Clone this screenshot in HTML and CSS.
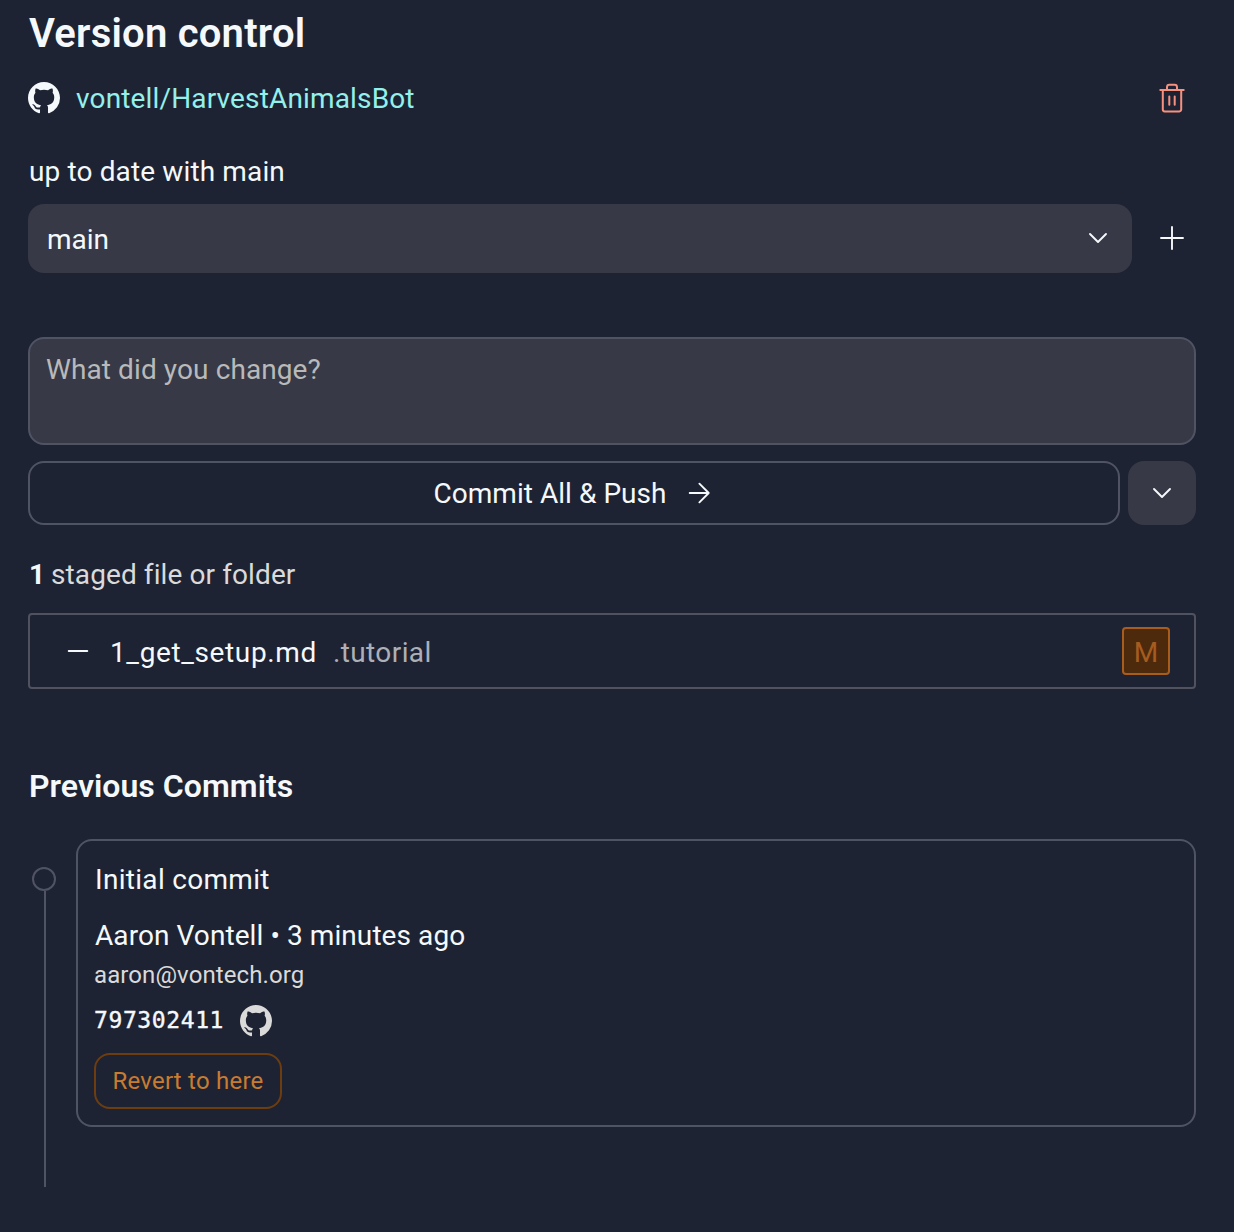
FILE: index.html
```html
<!DOCTYPE html>
<html lang="en">
<head>
<meta charset="utf-8">
<title>Version control</title>
<link rel="stylesheet" href="styles.css">
</head>
<body>
<svg class="sprite" width="0" height="0" aria-hidden="true">
  <symbol id="github" viewBox="0 0 16 16"><path fill="currentColor" d="M8 0C3.58 0 0 3.58 0 8c0 3.54 2.29 6.53 5.47 7.59.4.07.55-.17.55-.38 0-.19-.01-.82-.01-1.49-2.01.37-2.53-.49-2.69-.94-.09-.23-.48-.94-.82-1.13-.28-.15-.68-.52-.01-.53.63-.01 1.08.58 1.23.82.72 1.21 1.87.87 2.33.66.07-.52.28-.87.51-1.07-1.78-.2-3.64-.89-3.64-3.95 0-.87.31-1.59.82-2.15-.08-.2-.36-1.02.08-2.12 0 0 .67-.21 2.2.82.64-.18 1.32-.27 2-.27s1.36.09 2 .27c1.53-1.04 2.2-.82 2.2-.82.44 1.1.16 1.92.08 2.12.51.56.82 1.27.82 2.15 0 3.07-1.87 3.75-3.65 3.95.29.25.54.73.54 1.48 0 1.07-.01 1.93-.01 2.2 0 .21.15.46.55.38A8.01 8.01 0 0 0 16 8c0-4.42-3.58-8-8-8z"/></symbol>
  <symbol id="chevron" viewBox="0 0 32 32"><path d="M8 12l8 8 8-8"/></symbol>
</svg>
<main class="panel">
  <h1 class="title">Version control</h1>
  <div class="repo">
    <svg class="github"><use href="#github"/></svg>
    <a class="repo-link">vontell/HarvestAnimalsBot</a>
    <svg class="icon trash" viewBox="0 0 32 32"><path d="M4.3 8h23.4M6.8 8v19.6a1.8 1.8 0 0 0 1.8 1.8h14.8a1.8 1.8 0 0 0 1.8-1.8V8M11 8V5.2a2.4 2.4 0 0 1 2.4-2.4h5.2a2.4 2.4 0 0 1 2.4 2.4V8M13.3 14.5v8.2M18.7 14.5v8.2"/></svg>
  </div>
  <p class="status">up to date with main</p>
  <div class="branch-row">
    <div class="select"><span>main</span><svg class="icon"><use href="#chevron"/></svg></div>
    <svg class="icon plus" viewBox="0 0 32 32"><path d="M16 5v22M5 16h22"/></svg>
  </div>
  <div class="message">What did you change?</div>
  <div class="commit-row">
    <div class="commit"><span>Commit All &amp; Push</span><svg class="icon" viewBox="0 0 32 32"><path d="M6.7 16h19M16.4 6.7l9.3 9.3-9.3 9.3"/></svg></div>
    <div class="more"><svg class="icon"><use href="#chevron"/></svg></div>
  </div>
  <p class="staged"><b>1</b><span>staged file or folder</span></p>
  <div class="file">
    <svg class="icon" viewBox="0 0 32 32"><path d="M6.7 16h18.6"/></svg>
    <span class="name">1_get_setup.md</span><span class="dir">.tutorial</span>
    <div class="badge"><span>M</span></div>
  </div>
  <h2 class="subtitle">Previous Commits</h2>
  <div class="history">
    <div class="rail"><i class="dot"></i><i class="line"></i></div>
    <article class="card">
      <p class="subject">Initial commit</p>
      <p class="author">Aaron Vontell • 3 minutes ago</p>
      <p class="email">aaron@vontech.org</p>
      <div class="hash"><span>797302411</span><svg class="github"><use href="#github"/></svg></div>
      <div class="revert"><span>Revert to here</span></div>
    </article>
  </div>
</main>
</body>
</html>
```
FILE: styles.css
```css
* { box-sizing: border-box; margin: 0; }
body {
  background: #1e2333;
  color: #f5f9fc;
  font: 28px/36px Roboto, "Noto Sans", sans-serif;
}
.sprite { position: absolute; }
.panel { padding: 9px 38px 0 28px; }
.icon { width: 32px; height: 32px; flex: none; fill: none; stroke: currentColor; stroke-width: 1.9; stroke-linecap: round; stroke-linejoin: round; }
.github { width: 32px; height: 32px; flex: none; }
.title { padding-left: 1px; font-size: 40px; line-height: 50px; font-weight: 600; letter-spacing: 0.22px; }
.repo { display: flex; align-items: center; height: 48px; margin-top: 15px; padding-right: 8px; }
.repo-link { margin-left: 16px; padding-top: 2px; color: #93f0ea; letter-spacing: 0.15px; }
.trash { margin-left: auto; color: #f7917f; stroke-width: 2; }
.status { margin-top: 32px; padding-left: 1px; letter-spacing: 0.13px; }
.branch-row { display: flex; align-items: center; margin-top: 14px; padding-right: 8px; }
.select { display: flex; align-items: center; justify-content: space-between; flex: 1; height: 69px; padding: 0 18px 1px 19px; border-radius: 16px; background: #373947; }
.select span { padding-top: 3px; }
.plus { margin: 0 0 1px 24px; }
.message { height: 108px; margin-top: 64px; padding: 13px 16px; border: 2px solid #4f5364; border-radius: 16px; background: #373947; color: #b9b9b9; letter-spacing: 0.1px; }
.commit-row { display: flex; gap: 8px; height: 64px; margin-top: 16px; }
.commit { display: flex; align-items: center; justify-content: center; gap: 16px; flex: 1; border: 2px solid #4f5364; border-radius: 16px; }
.commit span { padding-top: 2px; letter-spacing: 0.04px; }
.more { display: flex; align-items: center; justify-content: center; width: 68px; border-radius: 16px; background: #373947; }
.staged { display: flex; margin-top: 32px; padding-left: 1px; color: #dadada; letter-spacing: 0.1px; }
.staged b { width: 22px; color: #f5f9fc; }
.file { display: flex; align-items: center; height: 76px; margin-top: 20px; padding: 0 24px 0 32px; border: 2px solid #50525f; border-radius: 4px; }
.name { margin-left: 16px; padding-top: 3px; letter-spacing: 0.63px; }
.dir { margin-left: 16px; padding-top: 3px; color: #adb0b6; letter-spacing: 0.4px; }
.badge { display: flex; align-items: center; justify-content: center; width: 48px; height: 48px; margin-left: auto; border: 2px solid #a95d1d; border-radius: 4px; background: #4d2a0c; color: #a65b1f; }
.badge span { padding-top: 3px; }
.subtitle { margin-top: 77px; padding-left: 1px; font-size: 32px; line-height: 40px; font-weight: 600; letter-spacing: 0.04px; }
.history { display: flex; margin-top: 33px; }
.rail { display: flex; flex-direction: column; width: 48px; height: 348px; padding: 28px 0 0 4px; }
.dot { width: 24px; height: 24px; border: 2px solid #4f5364; border-radius: 50%; }
.line { flex: 1; width: 2px; margin-left: 12px; background: #4f5364; }
.card { flex: 1; height: 288px; padding: 21px 16px 16px; border: 2px solid #4f5364; border-radius: 16px; }
.subject { padding-left: 1px; letter-spacing: 0.3px; }
.author { margin-top: 20px; padding-left: 1px; letter-spacing: 0.08px; }
.email { margin-top: 5px; font-size: 24px; line-height: 32px; color: #dadada; letter-spacing: 0.1px; }
.hash { display: flex; align-items: center; gap: 16px; height: 32px; margin-top: 14px; font: 23px/32px "DejaVu Sans Mono", monospace; letter-spacing: 0.6px; }
.hash span { padding-bottom: 2px; -webkit-text-stroke: 0.4px currentColor; }
.hash .github { color: #dadada; }
.revert { display: flex; align-items: center; justify-content: center; width: 188px; height: 56px; margin-top: 16px; border: 2px solid #6d3d10; border-radius: 16px; color: #c97b30; font-size: 24px; letter-spacing: 0.22px; }
```
